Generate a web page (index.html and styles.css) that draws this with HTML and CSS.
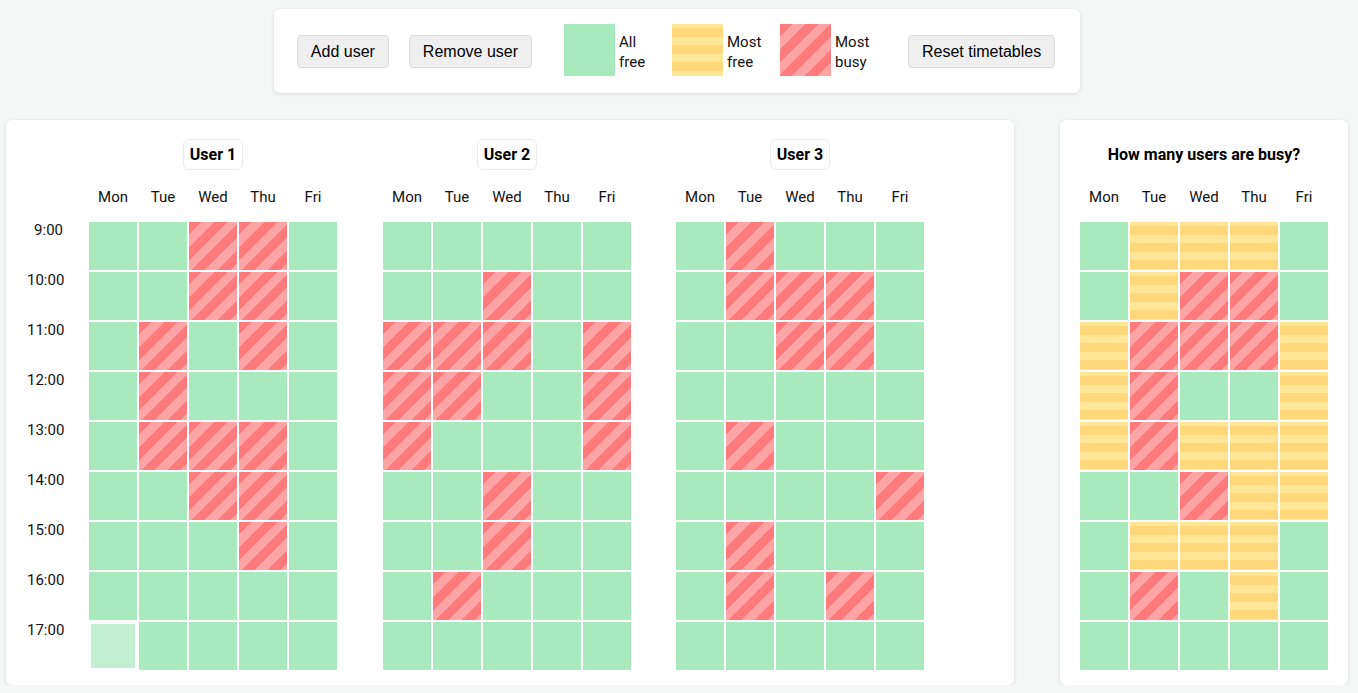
FILE: index.html
```html
<!DOCTYPE html>
<html lang="en">
<head>
<meta charset="utf-8">
<title>Timetables</title>
<link rel="stylesheet" href="styles.css">
</head>
<body>
<div class="page">
  <div class="toolbar">
    <button class="btn">Add user</button>
    <button class="btn">Remove user</button>
    <div class="legend">
      <div class="legend-item"><span class="swatch free"></span><span class="legend-text">All<br>free</span></div>
      <div class="legend-item"><span class="swatch some"></span><span class="legend-text">Most<br>free</span></div>
      <div class="legend-item"><span class="swatch busy"></span><span class="legend-text">Most<br>busy</span></div>
    </div>
    <button class="btn">Reset timetables</button>
  </div>

  <div class="main">
    <div class="card users">
      <div class="times">
        <div class="time">9:00</div>
        <div class="time">10:00</div>
        <div class="time">11:00</div>
        <div class="time">12:00</div>
        <div class="time">13:00</div>
        <div class="time">14:00</div>
        <div class="time">15:00</div>
        <div class="time">16:00</div>
        <div class="time">17:00</div>
      </div>

      <div class="table">
        <div class="title-row"><span class="title boxed">User 1</span></div>
        <div class="days"><span>Mon</span><span>Tue</span><span>Wed</span><span>Thu</span><span>Fri</span></div>
        <div class="grid">
          <div class="cell free"></div><div class="cell free"></div><div class="cell busy"></div><div class="cell busy"></div><div class="cell free"></div>
          <div class="cell free"></div><div class="cell free"></div><div class="cell busy"></div><div class="cell busy"></div><div class="cell free"></div>
          <div class="cell free"></div><div class="cell busy"></div><div class="cell free"></div><div class="cell busy"></div><div class="cell free"></div>
          <div class="cell free"></div><div class="cell busy"></div><div class="cell free"></div><div class="cell free"></div><div class="cell free"></div>
          <div class="cell free"></div><div class="cell busy"></div><div class="cell busy"></div><div class="cell busy"></div><div class="cell free"></div>
          <div class="cell free"></div><div class="cell free"></div><div class="cell busy"></div><div class="cell busy"></div><div class="cell free"></div>
          <div class="cell free"></div><div class="cell free"></div><div class="cell free"></div><div class="cell busy"></div><div class="cell free"></div>
          <div class="cell free"></div><div class="cell free"></div><div class="cell free"></div><div class="cell free"></div><div class="cell free"></div>
          <div class="cell hover"></div><div class="cell free"></div><div class="cell free"></div><div class="cell free"></div><div class="cell free"></div>
        </div>
      </div>

      <div class="table">
        <div class="title-row"><span class="title boxed">User 2</span></div>
        <div class="days"><span>Mon</span><span>Tue</span><span>Wed</span><span>Thu</span><span>Fri</span></div>
        <div class="grid">
          <div class="cell free"></div><div class="cell free"></div><div class="cell free"></div><div class="cell free"></div><div class="cell free"></div>
          <div class="cell free"></div><div class="cell free"></div><div class="cell busy"></div><div class="cell free"></div><div class="cell free"></div>
          <div class="cell busy"></div><div class="cell busy"></div><div class="cell busy"></div><div class="cell free"></div><div class="cell busy"></div>
          <div class="cell busy"></div><div class="cell busy"></div><div class="cell free"></div><div class="cell free"></div><div class="cell busy"></div>
          <div class="cell busy"></div><div class="cell free"></div><div class="cell free"></div><div class="cell free"></div><div class="cell busy"></div>
          <div class="cell free"></div><div class="cell free"></div><div class="cell busy"></div><div class="cell free"></div><div class="cell free"></div>
          <div class="cell free"></div><div class="cell free"></div><div class="cell busy"></div><div class="cell free"></div><div class="cell free"></div>
          <div class="cell free"></div><div class="cell busy"></div><div class="cell free"></div><div class="cell free"></div><div class="cell free"></div>
          <div class="cell free"></div><div class="cell free"></div><div class="cell free"></div><div class="cell free"></div><div class="cell free"></div>
        </div>
      </div>

      <div class="table table-last">
        <div class="title-row"><span class="title boxed">User 3</span></div>
        <div class="days"><span>Mon</span><span>Tue</span><span>Wed</span><span>Thu</span><span>Fri</span></div>
        <div class="grid">
          <div class="cell free"></div><div class="cell busy"></div><div class="cell free"></div><div class="cell free"></div><div class="cell free"></div>
          <div class="cell free"></div><div class="cell busy"></div><div class="cell busy"></div><div class="cell busy"></div><div class="cell free"></div>
          <div class="cell free"></div><div class="cell free"></div><div class="cell busy"></div><div class="cell busy"></div><div class="cell free"></div>
          <div class="cell free"></div><div class="cell free"></div><div class="cell free"></div><div class="cell free"></div><div class="cell free"></div>
          <div class="cell free"></div><div class="cell busy"></div><div class="cell free"></div><div class="cell free"></div><div class="cell free"></div>
          <div class="cell free"></div><div class="cell free"></div><div class="cell free"></div><div class="cell free"></div><div class="cell busy"></div>
          <div class="cell free"></div><div class="cell busy"></div><div class="cell free"></div><div class="cell free"></div><div class="cell free"></div>
          <div class="cell free"></div><div class="cell busy"></div><div class="cell free"></div><div class="cell busy"></div><div class="cell free"></div>
          <div class="cell free"></div><div class="cell free"></div><div class="cell free"></div><div class="cell free"></div><div class="cell free"></div>
        </div>
      </div>
    </div>

    <div class="card summary">
      <div class="table">
        <div class="title-row"><span class="title">How many users are busy?</span></div>
        <div class="days"><span>Mon</span><span>Tue</span><span>Wed</span><span>Thu</span><span>Fri</span></div>
        <div class="grid">
          <div class="cell free"></div><div class="cell some"></div><div class="cell some"></div><div class="cell some"></div><div class="cell free"></div>
          <div class="cell free"></div><div class="cell some"></div><div class="cell busy"></div><div class="cell busy"></div><div class="cell free"></div>
          <div class="cell some"></div><div class="cell busy"></div><div class="cell busy"></div><div class="cell busy"></div><div class="cell some"></div>
          <div class="cell some"></div><div class="cell busy"></div><div class="cell free"></div><div class="cell free"></div><div class="cell some"></div>
          <div class="cell some"></div><div class="cell busy"></div><div class="cell some"></div><div class="cell some"></div><div class="cell some"></div>
          <div class="cell free"></div><div class="cell free"></div><div class="cell busy"></div><div class="cell some"></div><div class="cell some"></div>
          <div class="cell free"></div><div class="cell some"></div><div class="cell some"></div><div class="cell some"></div><div class="cell free"></div>
          <div class="cell free"></div><div class="cell busy"></div><div class="cell free"></div><div class="cell some"></div><div class="cell free"></div>
          <div class="cell free"></div><div class="cell free"></div><div class="cell free"></div><div class="cell free"></div><div class="cell free"></div>
        </div>
      </div>
    </div>
  </div>
</div>
</body>
</html>
```

FILE: styles.css
```css
* {
  box-sizing: border-box;
}

html, body {
  margin: 0;
  padding: 0;
}

body {
  background: #f3f8f6;
  font-family: Roboto, "Liberation Sans", Arial, sans-serif;
  font-size: 15px;
  color: #111;
}

.page {
  width: 1342px;
  margin-left: 6px;
  padding-top: 9px;
}

/* Toolbar */
.toolbar {
  display: flex;
  align-items: center;
  width: fit-content;
  height: 84px;
  margin: 0 auto;
  padding: 0 25px 0 23px;
  background: #fff;
  border-radius: 6px;
  box-shadow: 0 1px 4px rgba(0, 0, 0, 0.12);
  gap: 20px;
}

.btn {
  font-family: "Liberation Sans", Arial, sans-serif;
  font-size: 16px;
  color: #000;
  height: 33px;
  padding: 0 13px;
  margin-top: 1px;
  background: #efefef;
  border: 1px solid #dcdcdc;
  border-radius: 4px;
}

.legend {
  display: flex;
  gap: 20px;
  margin: 0 20px 0 12px;
}

.legend-item {
  display: flex;
  align-items: center;
  width: 88px;
  gap: 4px;
}

.swatch {
  width: 51px;
  height: 52px;
  margin-top: -2px;
  flex: none;
}

.legend-text {
  line-height: 20px;
  font-size: 15px;
  color: #111;
  margin-top: 1px;
}

/* Colour states */
.free {
  background: #a8e9be;
}

.some {
  background: repeating-linear-gradient(180deg,
    #ffe596 0, #ffe596 4px,
    #ffd87b 4px, #ffd87b 13px,
    #ffe596 13px, #ffe596 17px);
}

.busy {
  background: repeating-linear-gradient(135deg,
    #ff7b7b 0, #ff7b7b 9px,
    #ffa4a4 9px, #ffa4a4 18px);
}

.hover {
  background: #c2efd2;
}

/* Main area */
.main {
  display: flex;
  gap: 46px;
  margin-top: 27px;
}

.card {
  background: #fff;
  border-radius: 6px;
  box-shadow: 0 1px 4px rgba(0, 0, 0, 0.12);
  height: 565px;
  padding-top: 19px;
}

.users {
  width: 1008px;
  display: flex;
  padding-left: 21px;
  gap: 44px;
}

.summary {
  width: 288px;
  display: flex;
  justify-content: center;
}

.times {
  width: 61px;
  margin-right: -44px;
  padding-top: 82px;
  padding-right: 25px;
  text-align: right;
}

.time {
  height: 50px;
  white-space: nowrap;
}

.table {
  width: 250px;
}

.table-last {
  margin-left: -1px;
}

.title-row {
  height: 31px;
  display: flex;
  justify-content: center;
  align-items: center;
}

.title {
  font-weight: 700;
  font-size: 16px;
  line-height: 19px;
  color: #000;
  padding: 5px 6px;
  border: 1px solid transparent;
  border-radius: 6px;
  white-space: nowrap;
}

.title.boxed {
  border-color: #ececec;
}

.days {
  display: grid;
  grid-template-columns: repeat(5, 50px);
  height: 18px;
  margin-top: 18px;
  text-align: center;
  color: #111;
}

.grid {
  display: grid;
  grid-template-columns: repeat(5, 50px);
  grid-auto-rows: 50px;
  margin-top: 15px;
}

.cell {
  border: 1px solid #fff;
}

.cell.hover {
  border-width: 3px;
}
```
